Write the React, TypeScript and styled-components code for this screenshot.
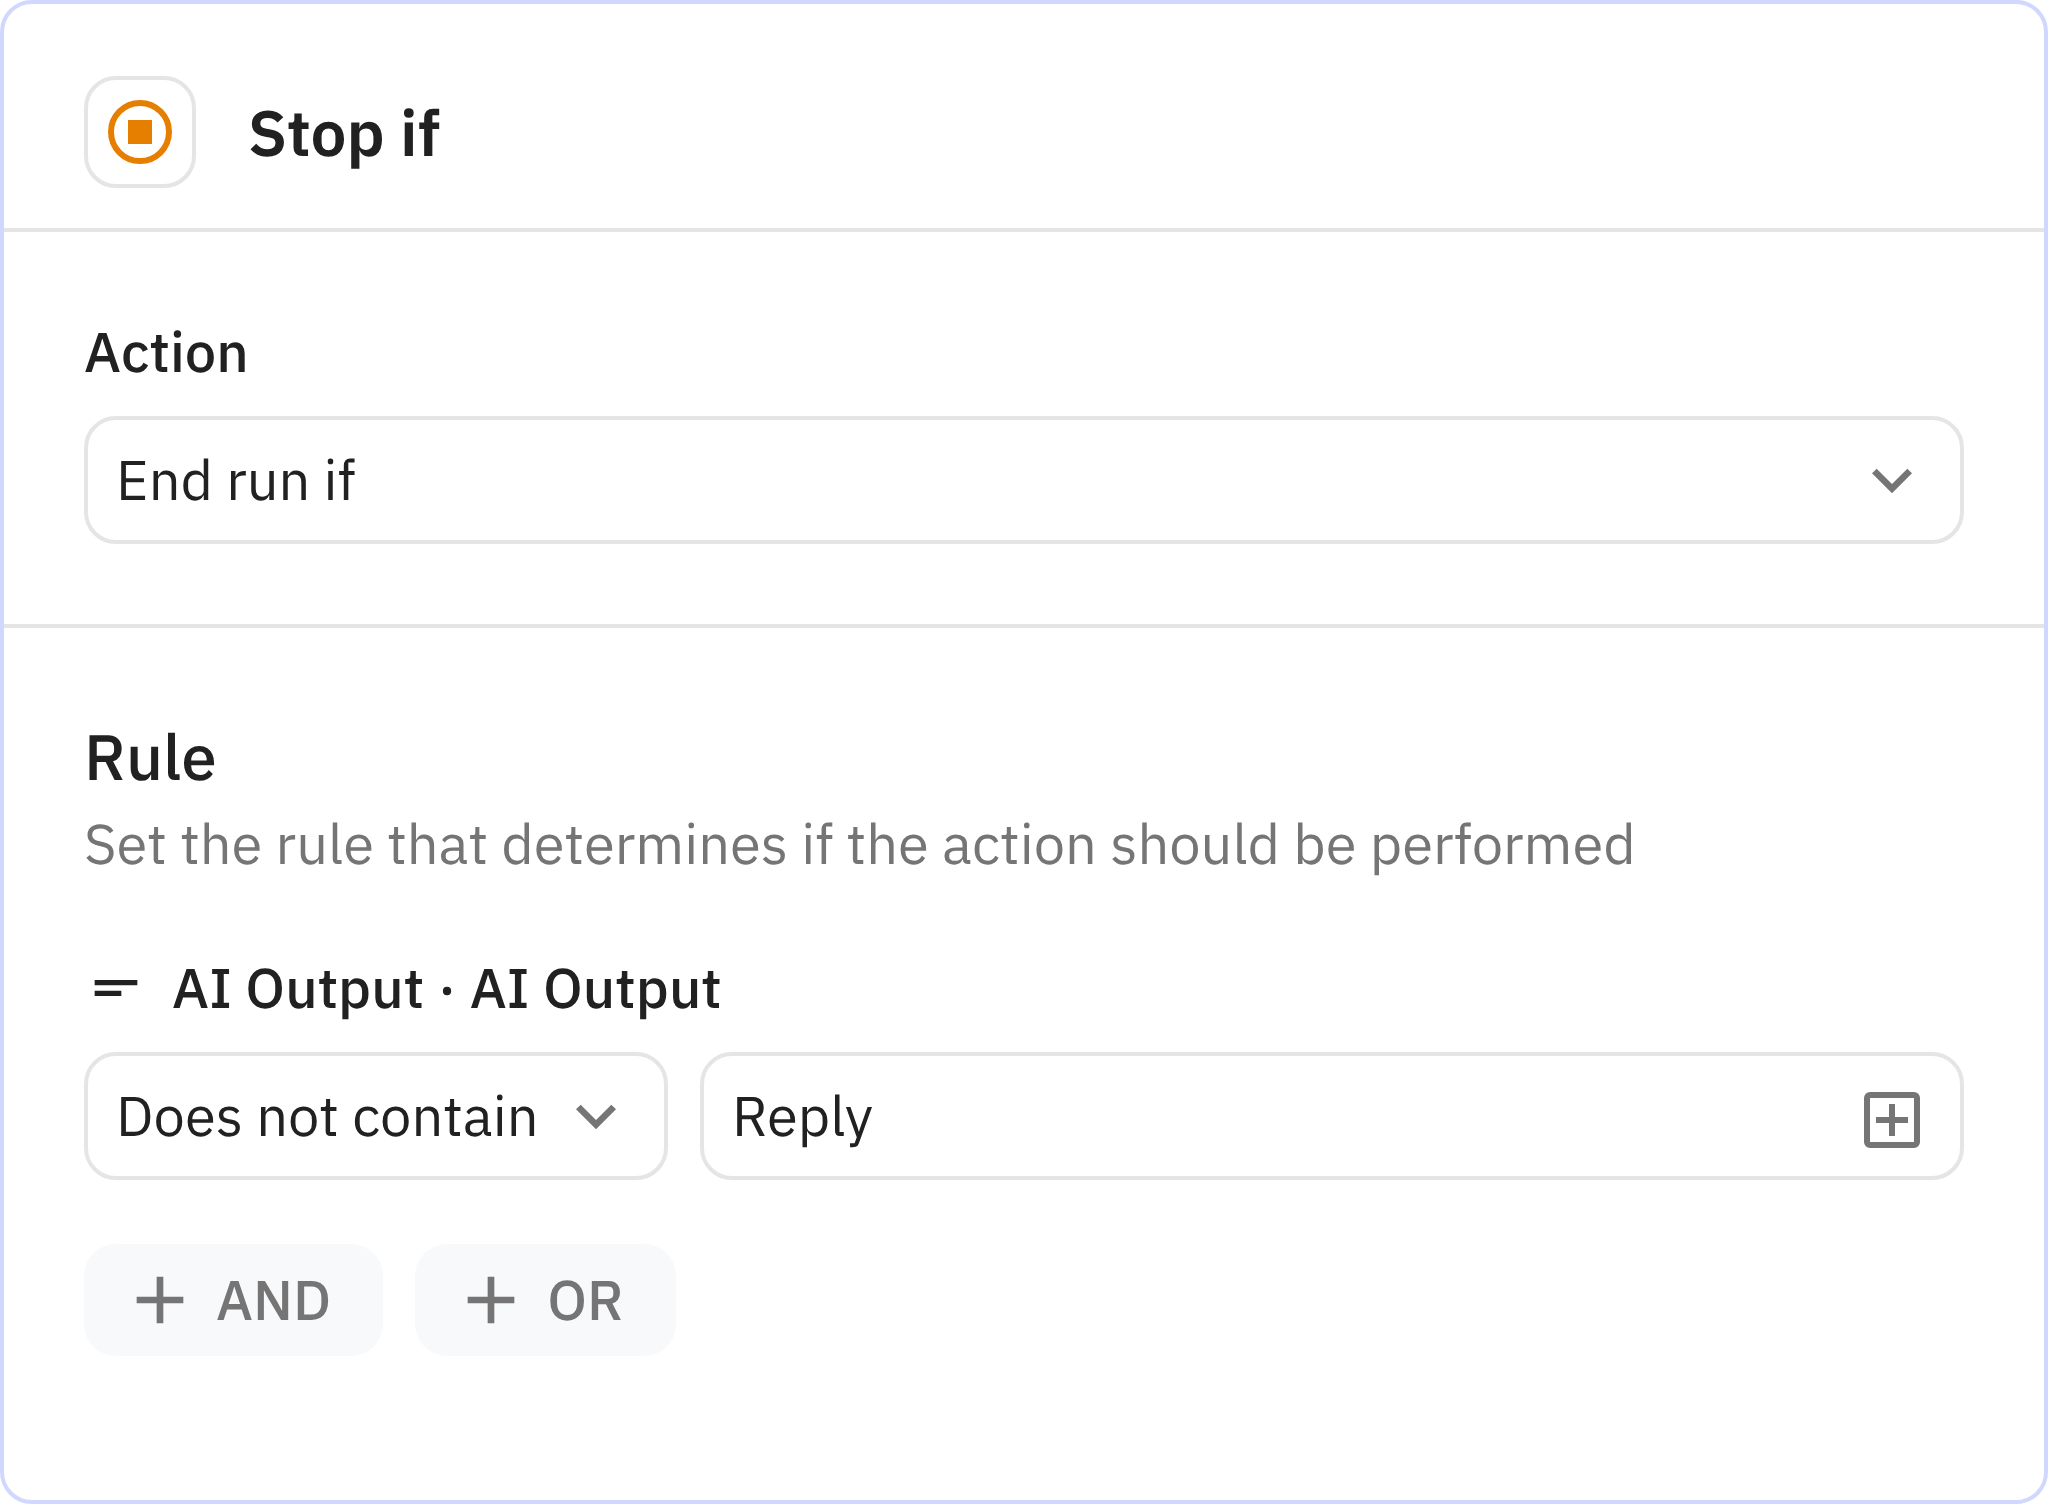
import React, { useId, useState } from "react";
import styled, { createGlobalStyle } from "styled-components";

const color = {
  text: "#212121",
  muted: "#757575",
  line: "#e5e5e5",
  frame: "#d0d8ff",
  accent: "#e67e00",
  soft: "#f8f9fb",
  surface: "#ffffff",
};

const fontStack = `"IBM Plex Sans", Roboto, "Liberation Sans", sans-serif`;

const GlobalStyle = createGlobalStyle`
  *, *::before, *::after { box-sizing: border-box; }
  body {
    margin: 0;
    background: ${color.surface};
    color: ${color.text};
    font-family: ${fontStack};
    font-size: 56px;
    line-height: 80px;
    text-rendering: geometricPrecision;
  }
  select, input, button { text-rendering: inherit; }
`;

const Card = styled.main`
  display: flex;
  flex-direction: column;
  min-height: 100vh;
  border: 4px solid ${color.frame};
  border-radius: 32px;
  background: ${color.surface};
`;

const Header = styled.header`
  display: flex;
  align-items: center;
  gap: 52px;
  padding: 72px 80px 40px;
  border-bottom: 4px solid ${color.line};
`;

const IconTile = styled.div`
  display: grid;
  place-items: center;
  width: 112px;
  height: 112px;
  border: 4px solid ${color.line};
  border-radius: 32px;
  color: ${color.accent};
`;

const Title = styled.h1`
  margin: 0;
  font-size: 64px;
  font-weight: 600;
  line-height: 96px;
`;

const Section = styled.section<{ $divided?: boolean }>`
  display: flex;
  flex-direction: column;
  padding: 80px;
  border-bottom: ${(p) => (p.$divided ? `4px solid ${color.line}` : "none")};
`;

const SectionTitle = styled.h2`
  margin: 0;
  font-size: 64px;
  font-weight: 500;
  line-height: 96px;
`;

const Hint = styled.p`
  margin: 0 0 64px;
  color: ${color.muted};
`;

const Label = styled.label`
  display: flex;
  align-items: center;
  gap: 24px;
  margin-bottom: 24px;
  font-weight: 500;
`;

const Row = styled.div`
  display: flex;
  gap: 32px;
`;

const ConditionRow = styled(Row)`
  margin-bottom: 64px;
`;

const SelectBox = styled.div<{ $width?: string }>`
  display: grid;
  grid-template-columns: minmax(0, 1fr);
  align-items: center;
  width: ${(p) => p.$width ?? "100%"};
  color: ${color.muted};

  > * {
    grid-area: 1 / 1;
  }

  > svg {
    justify-self: end;
    margin-right: 32px;
    pointer-events: none;
  }
`;

const Select = styled.select`
  appearance: none;
  width: 100%;
  height: 128px;
  padding: 0 112px 0 28px;
  border: 4px solid ${color.line};
  border-radius: 32px;
  background: ${color.surface};
  color: ${color.text};
  font: inherit;
`;

const InputBox = styled.div`
  display: flex;
  flex: 1;
  height: 128px;
  min-width: 0;
  padding: 0 40px 0 28px;
  border: 4px solid ${color.line};
  border-radius: 32px;
`;

const Input = styled.input`
  flex: 1;
  min-width: 0;
  padding: 0;
  border: 0;
  outline: 0;
  background: transparent;
  color: ${color.text};
  font: inherit;
`;

const InsertButton = styled.button`
  display: flex;
  align-self: flex-end;
  padding: 0 0 28px;
  border: 0;
  background: none;
  color: ${color.muted};
  cursor: pointer;
`;

const AddButton = styled.button`
  display: flex;
  align-items: center;
  gap: 16px;
  height: 112px;
  padding: 0 52px 0 36px;
  border: 0;
  border-radius: 32px;
  background: ${color.soft};
  color: ${color.muted};
  font: inherit;
  font-weight: 500;
  cursor: pointer;
`;

const StopIcon = () => (
  <svg width="64" height="64" viewBox="0 0 64 64" fill="none" aria-hidden="true">
    <circle cx="32" cy="32" r="29" stroke="currentColor" strokeWidth="6" />
    <rect x="20" y="20" width="24" height="24" fill="currentColor" />
  </svg>
);

const ChevronIcon = () => (
  <svg width="80" height="80" viewBox="0 0 24 24" fill="currentColor" aria-hidden="true">
    <path d="M16.59 8.59 12 13.17 7.41 8.59 6 10l6 6 6-6z" />
  </svg>
);

const ShortTextIcon = () => (
  <svg width="64" height="64" viewBox="0 0 24 24" fill="currentColor" aria-hidden="true">
    <path d="M4 9h16v2H4zm0 4h10v2H4z" />
  </svg>
);

const PlusIcon = () => (
  <svg width="80" height="80" viewBox="0 0 24 24" fill="currentColor" aria-hidden="true">
    <path d="M19 13h-6v6h-2v-6H5v-2h6V5h2v6h6z" />
  </svg>
);

const BoxPlusIcon = () => (
  <svg width="56" height="56" viewBox="0 0 56 56" fill="none" stroke="currentColor" strokeWidth="6" aria-hidden="true">
    <rect x="3" y="3" width="50" height="50" rx="3" />
    <path d="M28 12v32M12 28h32" />
  </svg>
);

export default function App() {
  const id = useId();
  const [value, setValue] = useState("Reply");

  return (
    <>
      <GlobalStyle />
      <Card>
        <Header>
          <IconTile>
            <StopIcon />
          </IconTile>
          <Title>Stop if</Title>
        </Header>

        <Section $divided>
          <Label htmlFor={`${id}-action`}>Action</Label>
          <SelectBox>
            <Select id={`${id}-action`}>
              <option>End run if</option>
            </Select>
            <ChevronIcon />
          </SelectBox>
        </Section>

        <Section>
          <SectionTitle>Rule</SectionTitle>
          <Hint>Set the rule that determines if the action should be performed</Hint>
          <Label htmlFor={`${id}-value`}>
            <ShortTextIcon />
            AI Output · AI Output
          </Label>
          <ConditionRow>
            <SelectBox $width="584px">
              <Select aria-label="Condition">
                <option>Does not contain</option>
              </Select>
              <ChevronIcon />
            </SelectBox>
            <InputBox>
              <Input id={`${id}-value`} value={value} onChange={(e) => setValue(e.target.value)} />
              <InsertButton type="button" aria-label="Insert reference">
                <BoxPlusIcon />
              </InsertButton>
            </InputBox>
          </ConditionRow>
          <Row>
            <AddButton type="button">
              <PlusIcon />
              AND
            </AddButton>
            <AddButton type="button">
              <PlusIcon />
              OR
            </AddButton>
          </Row>
        </Section>
      </Card>
    </>
  );
}
